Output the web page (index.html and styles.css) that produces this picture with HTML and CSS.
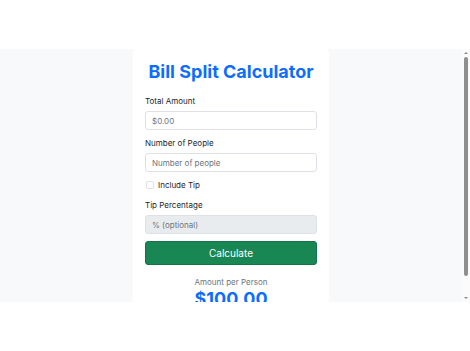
FILE: index.html
```html
<!DOCTYPE html>
<html lang="en">
<head>
    <meta charset="UTF-8">
    <meta name="viewport" content="width=device-width, initial-scale=1.0">
    <title>Bill Split Calculator</title>
    <link rel="stylesheet" href="styles.css">
</head>
<body>
    <div class="frame">
        <div class="viewport">
            <div class="card">
                <h1>Bill Split Calculator</h1>
                <label class="field-label" for="total">Total Amount</label>
                <input class="field" id="total" type="text" placeholder="$0.00">

                <label class="field-label" for="people">Number of People</label>
                <input class="field" id="people" type="text" placeholder="Number of people">

                <label class="check-row">
                    <input type="checkbox" class="check">
                    <span>Include Tip</span>
                </label>

                <label class="field-label" for="tip">Tip Percentage</label>
                <input class="field" id="tip" type="text" placeholder="% (optional)" disabled>

                <button class="calc-btn">Calculate</button>

                <div class="result">
                    <div class="result-label">Amount per Person</div>
                    <div class="result-value">$100.00</div>
                </div>
            </div>
        </div>
        <div class="scrollbar">
            <div class="arrow arrow-up"></div>
            <div class="thumb"></div>
            <div class="arrow arrow-down"></div>
        </div>
    </div>
</body>
</html>
```

FILE: styles.css
```css
* {
    margin: 0;
    padding: 0;
    box-sizing: border-box;
}

body {
    background: #ffffff;
    font-family: 'Inter', 'Liberation Sans', sans-serif;
    color: #212529;
}

.frame {
    margin-top: 49px;
    height: 253px;
    display: flex;
    background: #f8f9fa;
}

.viewport {
    flex: 1;
    overflow: hidden;
}

/* fake scrollbar, the headless browser hides the real one */
.scrollbar {
    width: 8px;
    background: #fbfbfb;
    display: flex;
    flex-direction: column;
    align-items: center;
}

.arrow {
    width: 0;
    height: 0;
    border-left: 2px solid transparent;
    border-right: 2px solid transparent;
    margin: 3px 0;
}

.arrow-up {
    border-bottom: 2px solid #8a8a8a;
}

.arrow-down {
    border-top: 2px solid #8a8a8a;
    margin-top: auto;
}

.thumb {
    width: 4px;
    height: 219px;
    background: #8f8f8f;
    border-radius: 2px;
}

.card {
    width: 196px;
    margin: 0 auto;
    background: #ffffff;
    border-radius: 4px;
    padding: 12px 12px 30px;
    display: flex;
    flex-direction: column;
}

h1 {
    color: #0d6efd;
    font-size: 18px;
    font-weight: 700;
    text-align: center;
    line-height: 22px;
    margin-bottom: 12px;
}

.field-label {
    font-size: 8px;
    line-height: 12px;
    margin-bottom: 4px;
}

.field {
    height: 19px;
    flex-shrink: 0;
    border: 1px solid #dee2e6;
    border-radius: 3px;
    padding: 0 6px;
    font-family: inherit;
    font-size: 8px;
    color: #212529;
    margin-bottom: 7px;
    background: #ffffff;
}

.field::placeholder {
    color: #6c757d;
}

.field:disabled {
    background: #e9ecef;
}

.check-row {
    display: flex;
    align-items: center;
    gap: 4px;
    font-size: 8px;
    line-height: 12px;
    margin-bottom: 8px;
    padding-left: 1px;
}

.check {
    appearance: none;
    width: 8px;
    height: 8px;
    border: 1px solid #dee2e6;
    border-radius: 2px;
    background: #ffffff;
}

.calc-btn {
    height: 24px;
    flex-shrink: 0;
    background: #198754;
    border: 1px solid #157347;
    border-radius: 3px;
    color: #ffffff;
    font-family: inherit;
    font-size: 10px;
    cursor: pointer;
}

.result {
    text-align: center;
    margin-top: 11px;
}

.result-label {
    font-size: 8px;
    color: #6c757d;
    line-height: 12px;
}

.result-value {
    font-size: 18px;
    font-weight: 700;
    color: #0d6efd;
    line-height: 22px;
}
```
